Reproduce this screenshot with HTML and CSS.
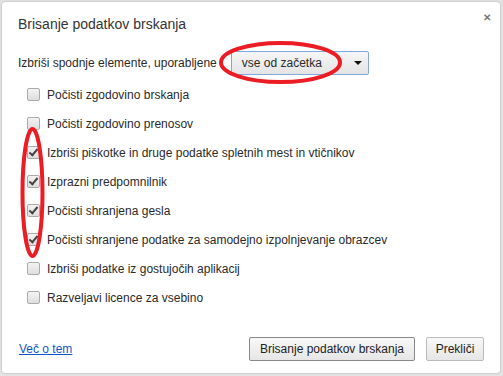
FILE: index.html
```html
<!DOCTYPE html>
<html lang="sl">
<head>
  <title>Brisanje podatkov brskanja</title>
  <meta charset="UTF-8">
  <link rel="stylesheet" href="styles.css">
</head>
<body>
<div class="dialog">
  <div class="close">&#x2715;</div>
  <h1 class="title">Brisanje podatkov brskanja</h1>

  <div class="range">
    <span>Izbriši spodnje elemente, uporabljene</span>
    <div class="select">
      <span>vse od začetka</span>
      <span class="arrow"></span>
    </div>
  </div>

  <ul class="items">
    <li><span class="box"></span>Počisti zgodovino brskanja</li>
    <li><span class="box"></span>Počisti zgodovino prenosov</li>
    <li><span class="box checked"></span>Izbriši piškotke in druge podatke spletnih mest in vtičnikov</li>
    <li><span class="box checked"></span>Izprazni predpomnilnik</li>
    <li><span class="box checked"></span>Počisti shranjena gesla</li>
    <li><span class="box checked"></span>Počisti shranjene podatke za samodejno izpolnjevanje obrazcev</li>
    <li><span class="box"></span>Izbriši podatke iz gostujočih aplikacij</li>
    <li><span class="box"></span>Razveljavi licence za vsebino</li>
  </ul>

  <div class="footer">
    <a class="more" href="#">Več o tem</a>
    <div class="buttons">
      <button class="btn default">Brisanje podatkov brskanja</button>
      <button class="btn">Prekliči</button>
    </div>
  </div>
</div>

<svg class="marks" width="503" height="376" viewBox="0 0 503 376">
  <ellipse cx="280.5" cy="62.5" rx="59.5" ry="19.5" fill="none" stroke="#ec1c24" stroke-width="4"/>
  <ellipse cx="32.5" cy="192.5" rx="10" ry="63.5" fill="none" stroke="#ec1c24" stroke-width="4"/>
</svg>
</body>
</html>
```

FILE: styles.css
```css
body {
  margin: 0;
  width: 503px;
  height: 376px;
  position: relative;
  background: #e4e4e4;
  font-family: "Liberation Sans", Arial, sans-serif;
  font-size: 12px;
  color: #2a2a2a;
  overflow: hidden;
}

.dialog {
  position: relative;
  box-sizing: border-box;
  margin: 2px 3px 0 2px;
  height: 371px;
  padding: 0 16px;
  background: #fff;
  border-radius: 3px;
  box-shadow: 0 0 2px rgba(0, 0, 0, 0.35);
}

.close {
  position: absolute;
  top: 10px;
  right: 9px;
  font-size: 10px;
  font-weight: bold;
  color: #777;
}

.title {
  margin: 0;
  padding-top: 12px;
  height: 20px;
  line-height: 20px;
  font-size: 14px;
  font-weight: normal;
  color: #333;
}

.range {
  display: flex;
  align-items: center;
  margin-top: 17px;
  height: 24px;
}

.select {
  display: flex;
  align-items: center;
  justify-content: space-between;
  box-sizing: border-box;
  width: 138px;
  height: 24px;
  margin-left: 14px;
  padding: 0 6px 0 10px;
  border: 1px solid #80a8dc;
  border-radius: 2px;
  background: linear-gradient(#f6f6f6, #e4e4e4);
}

.arrow {
  width: 0;
  height: 0;
  border-left: 4px solid transparent;
  border-right: 4px solid transparent;
  border-top: 4px solid #111;
}

.items {
  list-style: none;
  margin: 5px 0 0;
  padding: 0 0 0 9px;
}

.items li {
  display: flex;
  align-items: center;
  height: 29px;
}

.box {
  box-sizing: border-box;
  width: 13px;
  height: 13px;
  margin-right: 7px;
  border: 1px solid #aaa;
  border-radius: 2px;
  background: linear-gradient(#f3f3f3, #dedede);
  position: relative;
}

.box.checked:after {
  content: "";
  position: absolute;
  left: 3px;
  top: 0px;
  width: 3px;
  height: 7px;
  border-right: 2px solid #444;
  border-bottom: 2px solid #444;
  transform: rotate(40deg);
}

.footer {
  display: flex;
  align-items: center;
  justify-content: space-between;
  margin-top: 25px;
  padding-left: 1px;
}

.more {
  color: #1155cc;
  text-decoration: underline;
}

.buttons {
  display: flex;
  gap: 11px;
}

.btn {
  height: 24px;
  padding: 0 8px;
  font: inherit;
  color: #222;
  border: 1px solid #bbb;
  border-radius: 2px;
  background: linear-gradient(#f8f8f8, #e6e6e6);
}

.btn.default {
  width: 166px;
  border-color: #888;
}

.btn:last-child {
  width: 58px;
}

.marks {
  position: absolute;
  top: 0;
  left: 0;
  pointer-events: none;
}
```
